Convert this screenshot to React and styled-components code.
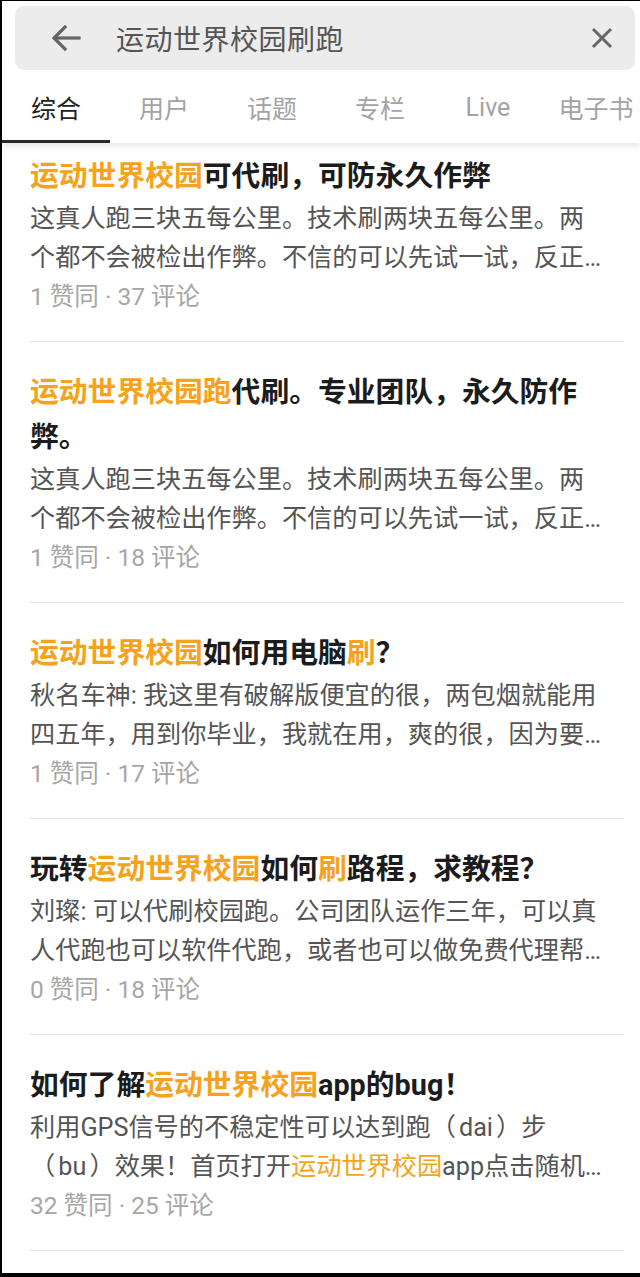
import React from "react";
import styled, { createGlobalStyle } from "styled-components";

const Global = createGlobalStyle`
  html, body { margin: 0; padding: 0; background: #000; }
  body { font-family: Roboto, "Noto Sans CJK SC", sans-serif; }
  * { box-sizing: border-box; }
`;

const Frame = styled.div`
  width: 640px;
  height: 1277px;
  background: #fff;
  border-left: 2px solid #000;
  border-top: 1px solid #000;
  border-bottom: 4px solid #000;
  overflow: hidden;
  display: flex;
  flex-direction: column;
`;

const Header = styled.header`
  position: relative;
  z-index: 1;
  background: #fff;
  box-shadow: 0 3px 6px rgba(0, 0, 0, 0.1);
`;

const SearchBar = styled.div`
  margin: 5px 5px 0 13px;
  height: 64px;
  background: #ececec;
  border-radius: 9px;
  display: flex;
  align-items: center;
  padding: 0 22px 0 36px;
`;

const IconButton = styled.span`
  display: flex;
  align-items: center;
  justify-content: center;
  width: ${(p) => p.$w}px;
  color: #666;
`;

const Query = styled.div`
  flex: 1;
  margin-left: 35px;
  font-size: 28px;
  color: #555;
  letter-spacing: 0.5px;
`;

const Tabs = styled.nav`
  display: flex;
  height: 73px;
  white-space: nowrap;
`;

const Tab = styled.div`
  flex: 0 0 108px;
  display: flex;
  align-items: center;
  justify-content: center;
  font-size: 25px;
  color: ${(p) => (p.$active ? "#222" : "#a3a3a3")};
  border-bottom: 3px solid ${(p) => (p.$active ? "#2a2a2a" : "transparent")};
  padding-top: 4px;
`;

const List = styled.main`
  flex: 1;
`;

const Item = styled.article`
  margin: 0 16px 0 28px;
  padding: ${(p) => (p.$first ? "11px" : "28px")} 0 24px;
  border-bottom: 1.5px solid #e6e6e6;
`;

const Title = styled.h2`
  margin: 0;
  padding-right: 16px;
  font-size: 28.8px;
  line-height: 45px;
  font-weight: 700;
  color: #1c1c1c;
`;

const Hl = styled.span`
  color: #f5a21c;
`;

const Body = styled.p`
  margin: 0;
  padding-right: 18px;
  font-size: 25.2px;
  line-height: 39px;
  color: #555;
  display: -webkit-box;
  -webkit-line-clamp: 2;
  -webkit-box-orient: vertical;
  overflow: hidden;
`;

const Meta = styled.div`
  font-size: 24.5px;
  line-height: 40px;
  color: #a6a6a6;
  white-space: pre;
`;

const BackIcon = () => (
  <svg width="30" height="28" viewBox="0 0 30 28" fill="none" stroke="#666" strokeWidth="3.2" strokeLinecap="square">
    <path d="M28 14H4" />
    <path d="M14 3L3 14l11 11" />
  </svg>
);

const CloseIcon = () => (
  <svg width="22" height="22" viewBox="0 0 22 22" fill="none" stroke="#666" strokeWidth="3">
    <path d="M2 2l18 18M20 2L2 20" />
  </svg>
);

const K = "运动世界校园";

const items = [
  {
    title: [[K, true], ["可代刷，可防永久作弊"]],
    body: [["这真人跑三块五每公里。技术刷两块五每公里。两个都不会被检出作弊。不信的可以先试一试，反正不会有损失，需要的联系我。"]],
    meta: "1 赞同 · 37 评论",
  },
  {
    title: [[K + "跑", true], ["代刷。专业团队，永久防作弊。"]],
    body: [["这真人跑三块五每公里。技术刷两块五每公里。两个都不会被检出作弊。不信的可以先试一试，反正不会有损失，需要的联系我。"]],
    meta: "1 赞同 · 18 评论",
  },
  {
    title: [[K, true], ["如何用电脑"], ["刷", true], ["？"]],
    body: [["秋名车神: 我这里有破解版便宜的很，两包烟就能用四五年，用到你毕业，我就在用，爽的很，因为要自己用所以一直在更新。"]],
    meta: "1 赞同 · 17 评论",
  },
  {
    title: [["玩转"], [K, true], ["如何"], ["刷", true], ["路程，求教程？"]],
    body: [["刘璨: 可以代刷校园跑。公司团队运作三年，可以真人代跑也可以软件代跑，或者也可以做免费代理帮我们推广赚钱。"]],
    meta: "0 赞同 · 18 评论",
  },
  {
    title: [["如何了解"], [K, true], ["app的bug！"]],
    body: [
      ["利用GPS信号的不稳定性可以达到跑（\u202fdai\u202f）步（\u202fbu\u202f）效果！首页打开"],
      [K, true],
      ["app点击随机跑，然后等待信号漂移。"],
    ],
    meta: "32 赞同 · 25 评论",
  },
];

const tabs = ["综合", "用户", "话题", "专栏", "Live", "电子书"];

const renderParts = (parts) =>
  parts.map(([t, h], i) => (h ? <Hl key={i}>{t}</Hl> : <React.Fragment key={i}>{t}</React.Fragment>));

export default function App() {
  return (
    <>
      <Global />
      <Frame>
        <Header>
          <SearchBar>
            <IconButton $w={30}>
              <BackIcon />
            </IconButton>
            <Query>运动世界校园刷跑</Query>
            <IconButton $w={22}>
              <CloseIcon />
            </IconButton>
          </SearchBar>
          <Tabs>
            {tabs.map((t, i) => (
              <Tab key={t} $active={i === 0}>
                {t}
              </Tab>
            ))}
          </Tabs>
        </Header>
        <List>
          {items.map((it, i) => (
            <Item key={i} $first={i === 0}>
              <Title>{renderParts(it.title)}</Title>
              <Body>{renderParts(it.body)}</Body>
              <Meta>{it.meta}</Meta>
            </Item>
          ))}
        </List>
      </Frame>
    </>
  );
}
